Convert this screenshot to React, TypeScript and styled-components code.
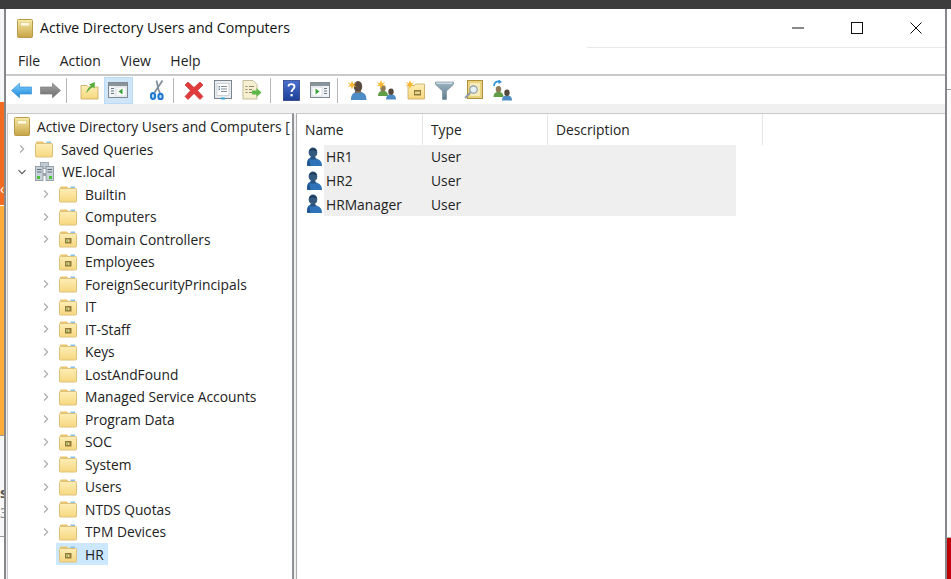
import React from "react";
import styled, { createGlobalStyle } from "styled-components";

const GlobalStyle = createGlobalStyle`
  html, body {
    margin: 0;
    height: 100%;
    overflow: hidden;
    background: #ffffff;
  }
  #root {
    height: 100%;
  }
`;

const uiFont = `"Open Sans", "Noto Sans", "Liberation Sans", sans-serif`;

const Desktop = styled.div`
  display: flex;
  flex-direction: column;
  height: 579px;
  width: 951px;
  overflow: hidden;
  font-family: ${uiFont};
  color: #1a1a1a;
`;

const TopBar = styled.div`
  height: 9px;
  flex: none;
  background: #3c3c3c;
`;

const Workspace = styled.div`
  display: flex;
  flex: 1;
  min-height: 0;
`;

const Edge = styled.div<{ $w: number }>`
  width: ${(p) => p.$w}px;
  flex: none;
  display: flex;
  flex-direction: column;
  overflow: hidden;
`;

const EdgeBlock = styled.div<{ $h: number; $bg: string; $line?: string }>`
  height: ${(p) => p.$h}px;
  flex: none;
  background: ${(p) => p.$bg};
  border-top: ${(p) => (p.$line ? `1px solid ${p.$line}` : "none")};
  box-sizing: border-box;
  font-size: 14px;
  line-height: 1;
  overflow: hidden;
  color: #555;
`;

const EdgeGlyph = styled.div<{ $top: number; $bold?: boolean; $color?: string }>`
  padding-top: ${(p) => p.$top}px;
  font-weight: ${(p) => (p.$bold ? 700 : 400)};
  color: ${(p) => p.$color ?? "#555"};
`;

const Window = styled.div`
  flex: 1;
  min-width: 0;
  display: flex;
  flex-direction: column;
  background: #ffffff;
  border-left: 2px solid #85878a;
  border-right: 2px solid #85878a;
`;

const TitleBar = styled.div`
  height: 38px;
  flex: none;
  display: flex;
  align-items: center;
  padding-left: 11px;
`;

const TitleText = styled.div`
  flex: 1;
  margin-left: 7px;
  font-size: 14.1px;
  color: #111;
  padding-bottom: 1px;
`;

const WindowButton = styled.div`
  width: 59px;
  height: 38px;
  display: flex;
  align-items: center;
  justify-content: center;
  padding-bottom: 1px;
  box-sizing: border-box;
`;

const MenuBar = styled.div`
  height: 27px;
  flex: none;
  display: flex;
  align-items: center;
  gap: 19.5px;
  padding-left: 12px;
  font-size: 14px;
  color: #222;
  position: relative;
`;

const MenuRule = styled.div`
  position: absolute;
  top: 0;
  right: 0;
  width: 358px;
  height: 1px;
  background: #e9e9e9;
`;

const Toolbar = styled.div`
  height: 28px;
  flex: none;
  display: flex;
  align-items: center;
  padding-left: 0.5px;
  border-top: 2px solid #c9c9c9;
`;

const ToolButton = styled.div<{ $active?: boolean }>`
  width: 29px;
  height: 27px;
  flex: none;
  display: flex;
  align-items: center;
  justify-content: center;
  box-sizing: border-box;
  background: ${(p) => (p.$active ? "#cfe6f8" : "transparent")};
  border: 1px solid ${(p) => (p.$active ? "#b9dbf5" : "transparent")};
`;

const ToolSep = styled.div<{ $left: number; $right: number; $hidden?: boolean }>`
  width: 1px;
  height: 25px;
  flex: none;
  margin: 0 ${(p) => p.$right}px 0 ${(p) => p.$left}px;
  background: ${(p) => (p.$hidden ? "transparent" : "#b5b5b5")};
`;

const Band = styled.div`
  height: 9px;
  flex: none;
  background: #f0f0f0;
`;

const Panes = styled.div`
  flex: 1;
  min-height: 0;
  display: flex;
  background: #f0f0f0;
`;

const TreePane = styled.div`
  width: 287px;
  margin-left: 1px;
  flex: none;
  box-sizing: border-box;
  background: #ffffff;
  border-right: 2px solid #8f9296;
  border-top: 1px solid #c8c8c8;
  border-left: 1px solid #c8c8c8;
  padding-top: 1.5px;
  overflow: hidden;
  display: grid;
  grid-auto-rows: 22.5px;
  font-size: 13.8px;
  color: #222;
`;

const TreeRow = styled.div<{ $level: number }>`
  display: flex;
  align-items: center;
  padding-left: ${(p) => 6 + p.$level * 24}px;
  white-space: nowrap;
`;

const Twisty = styled.div`
  width: 16px;
  flex: none;
  display: flex;
  align-items: center;
  justify-content: center;
`;

const NodeLabel = styled.div<{ $selected?: boolean }>`
  display: flex;
  align-items: center;
  gap: 8px;
  height: 22px;
  padding: 0 4px 0 3px;
  margin-left: 2px;
  background: ${(p) => (p.$selected ? "#cce8ff" : "transparent")};
`;

const RootRow = styled.div`
  display: flex;
  align-items: center;
  gap: 7px;
  padding-left: 6px;
  white-space: nowrap;
`;

const ListPane = styled.div`
  flex: 1;
  min-width: 0;
  margin-left: 2px;
  background: #ffffff;
  border-top: 1px solid #c8c8c8;
  border-left: 1px solid #a9acaf;
  font-size: 13.8px;
  color: #222;
`;

const ListHeader = styled.div`
  display: grid;
  grid-template-columns: 126px 125px 215px;
  height: 31px;
  width: 466px;
`;

const HeaderCell = styled.div`
  display: flex;
  align-items: center;
  padding-left: 8px;
  border-right: 1px solid #e5e5e5;
`;

const ListRow = styled.div`
  display: grid;
  grid-template-columns: 27px 99px 1fr;
  align-items: center;
  height: 23.7px;
  width: 439px;
`;

const RowIcon = styled.div`
  display: flex;
  align-items: center;
  padding-left: 9px;
  height: 100%;
`;

const RowCell = styled.div<{ $inset?: number }>`
  display: flex;
  align-items: center;
  height: 100%;
  background: #efefef;
  padding-left: ${(p) => p.$inset ?? 2}px;
`;

const Defs = styled.svg`
  position: absolute;
  width: 0;
  height: 0;
`;

const GradientDefs = () => (
  <Defs aria-hidden>
    <defs>
      <linearGradient id="gold" x1="0" y1="0" x2="0" y2="1">
        <stop offset="0" stopColor="#f8eba8" />
        <stop offset="1" stopColor="#c7a445" />
      </linearGradient>
      <linearGradient id="folder" x1="0" y1="0" x2="0" y2="1">
        <stop offset="0" stopColor="#fdeeb6" />
        <stop offset="1" stopColor="#f6d77f" />
      </linearGradient>
      <linearGradient id="blueArrow" x1="0" y1="0" x2="0" y2="1">
        <stop offset="0" stopColor="#7fd0ff" />
        <stop offset="1" stopColor="#1b86d8" />
      </linearGradient>
      <linearGradient id="greyArrow" x1="0" y1="0" x2="0" y2="1">
        <stop offset="0" stopColor="#a6a6a6" />
        <stop offset="1" stopColor="#6b6b6b" />
      </linearGradient>
      <linearGradient id="help" x1="0" y1="0" x2="0" y2="1">
        <stop offset="0" stopColor="#4a6fd0" />
        <stop offset="1" stopColor="#1c3f96" />
      </linearGradient>
      <linearGradient id="funnel" x1="0" y1="0" x2="0" y2="1">
        <stop offset="0" stopColor="#9fb4c2" />
        <stop offset="1" stopColor="#5f7d90" />
      </linearGradient>
    </defs>
  </Defs>
);

const Chevron = ({ open }: { open?: boolean }) =>
  open ? (
    <svg width="10" height="10" viewBox="0 0 10 10">
      <path d="M1.5 3.2 5 6.7 8.5 3.2" fill="none" stroke="#555" strokeWidth="1.1" />
    </svg>
  ) : (
    <svg width="10" height="10" viewBox="0 0 10 10">
      <path d="M3.2 1.5 6.7 5 3.2 8.5" fill="none" stroke="#a8a8a8" strokeWidth="1.1" />
    </svg>
  );

const BookIcon = () => (
  <svg width="16" height="19" viewBox="0 0 16 19" style={{ flex: "none" }}>
    <rect x="0.5" y="0.5" width="15" height="18" rx="1" fill="url(#gold)" stroke="#b99a4a" />
    <rect x="3.5" y="3.5" width="9" height="3.5" fill="#fdf8dc" stroke="#d9c67c" strokeWidth="0.6" />
  </svg>
);

const FolderIcon = ({ ou }: { ou?: boolean }) => (
  <svg width="18" height="18" viewBox="0 0 18 18" style={{ flex: "none" }}>
    <path d="M1 4V2.5C1 2 1.4 1.6 2 1.6H8L9.3 3H16.5V4Z" fill="#e9c66d" />
    <rect x="11.5" y="1.5" width="4.5" height="1.6" fill="#8cc0e8" />
    <rect x="0.5" y="3.5" width="17" height="13.5" rx="0.8" fill="url(#folder)" stroke="#dfc27a" />
    {ou && (
      <>
        <rect x="6" y="8" width="6.5" height="5.5" fill="#8f7a3c" />
        <rect x="7" y="9.5" width="3.5" height="2.6" fill="#e6d48a" />
        <rect x="7.5" y="10.5" width="1.5" height="1.2" fill="#4f9a3a" />
      </>
    )}
  </svg>
);

const DomainIcon = () => (
  <svg width="19" height="19" viewBox="0 0 19 19" style={{ flex: "none" }}>
    <rect x="5.5" y="0.5" width="8" height="6" fill="#c2cbd2" stroke="#8794a0" strokeWidth="0.7" />
    <rect x="0.5" y="4.5" width="7.5" height="14" fill="#c9d1d8" stroke="#84909b" strokeWidth="0.8" />
    <rect x="11" y="4.5" width="7.5" height="14" fill="#c9d1d8" stroke="#84909b" strokeWidth="0.8" />
    <path d="M2 7.5h4.5M2 10h4.5M12.5 7.5H17M12.5 10H17" stroke="#5f6d79" strokeWidth="1" />
    <rect x="2" y="14" width="3" height="3" fill="#4cc23a" />
    <rect x="14" y="14" width="3" height="3" fill="#4cc23a" />
    <rect x="8" y="11" width="3" height="3" fill="#9aa5ae" />
  </svg>
);

const UserIcon = () => (
  <svg width="17" height="20" viewBox="0 0 17 20" style={{ flex: "none" }}>
    <path d="M1 18c0-4 1-6.500 3.500-7.500h4c1 .5 2 1 3 1.500 3 1 4.500 3 4.500 7H3c-1 0-2-.2-2-1Z" fill="#2f72b8" />
    <path d="M1 18c0-3 .5-5 2-6.500l1.500 7.500H3c-1 0-2-.2-2-1Z" fill="#1f5590" />
    <ellipse cx="7" cy="5.500" rx="4.300" ry="5" fill="#33597f" />
    <path d="M2.800 4.500C3.500 0 10.500 0 11.200 4.500 9 3.300 5 3.300 2.800 4.500Z" fill="#1d3d60" />
    <path d="M4.500 10h5v2.500h-5Z" fill="#2a5380" />
  </svg>
);

const BackIcon = () => (
  <svg width="21" height="17" viewBox="0 0 21 17">
    <path d="M.5 8.500 8.500 1.200V5H20.500V12H8.500v3.800Z" fill="url(#blueArrow)" stroke="#3e93d1" strokeWidth=".7" />
  </svg>
);

const ForwardIcon = () => (
  <svg width="21" height="17" viewBox="0 0 21 17">
    <path d="M20.500 8.500 12.500 1.200V5H.5V12H12.500v3.800Z" fill="url(#greyArrow)" stroke="#7d7d7d" strokeWidth=".7" />
  </svg>
);

const UpIcon = () => (
  <svg width="19" height="19" viewBox="0 0 19 19">
    <path d="M1 4.500h6l1.500 1.500h9.500v12H1Z" fill="url(#folder)" stroke="#c9a75a" strokeWidth=".8" />
    <path d="M6 13c.5-4 2.500-6.500 5-8L9 3.500l6-2.500-.5 6.500-1.700-1.500c-2.500 1.500-4.500 3.500-6.800 6.500Z" fill="#58ad3a" />
  </svg>
);

const PaneFrame = () => (
  <>
    <rect x=".5" y="1.500" width="19" height="15" fill="#f1f4f6" stroke="#7f8a92" />
    <rect x="1" y="2" width="18" height="3" fill="#8a949b" />
  </>
);

const TreeToggleIcon = () => (
  <svg width="20" height="18" viewBox="0 0 20 18">
    <PaneFrame />
    <path d="M3 7.500h3M3 10h3M3 12.500h3" stroke="#6a7a88" />
    <rect x="8" y="6" width="10" height="9" fill="#fff" stroke="#b9c2c9" strokeWidth=".5" />
    <path d="M14.500 7.500v6L10.500 10.500Z" fill="#3aa33a" />
  </svg>
);

const ActionPaneIcon = () => (
  <svg width="20" height="18" viewBox="0 0 20 18">
    <PaneFrame />
    <rect x="2" y="6" width="10" height="9" fill="#fff" stroke="#b9c2c9" strokeWidth=".5" />
    <path d="M5.500 7.500v6l4-3Z" fill="#3aa33a" />
    <path d="M14 7.500h3M14 10h3M14 12.500h3" stroke="#6a7a88" />
  </svg>
);

const CutIcon = () => (
  <svg width="14" height="20" viewBox="0 0 14 20">
    <path d="M12.500.5 4.500 12.500M6.500.5 8.500 9.500 10 13" stroke="#7f8e99" strokeWidth="1.700" fill="none" />
    <ellipse cx="3" cy="16" rx="2.200" ry="3" fill="#bcdcf5" stroke="#1f78d0" strokeWidth="2" />
    <ellipse cx="10.500" cy="16.500" rx="2.200" ry="2.800" fill="#bcdcf5" stroke="#1f78d0" strokeWidth="2" />
  </svg>
);

const DeleteIcon = () => (
  <svg width="20" height="19" viewBox="0 0 20 19">
    <path d="M4 1 10 6.500 16 1 19 4 13.500 9.500 19 15.500 16 18.500 10 12.500 4 18.500 1 15.500 6.500 9.500 1 4Z" fill="#e23b3b" stroke="#b92a2a" strokeWidth=".6" />
  </svg>
);

const PropertiesIcon = () => (
  <svg width="18" height="20" viewBox="0 0 18 20">
    <rect x=".5" y=".5" width="17" height="18" fill="#e9edf0" stroke="#7b858d" />
    <rect x="3" y="3.500" width="12" height="12" fill="#fff" stroke="#b4bcc3" strokeWidth=".6" />
    <path d="M7 6.500h6M7 9h6M7 11.500h6" stroke="#7f8c96" />
    <rect x="4.500" y="6" width="1.500" height="1.500" fill="#5c8cb3" />
    <rect x="4.500" y="8.500" width="1.500" height="1.500" fill="#5c8cb3" />
    <rect x="7" y="17.500" width="4" height="2" fill="#35a3dd" />
  </svg>
);

const ExportIcon = () => (
  <svg width="20" height="20" viewBox="0 0 20 20">
    <path d="M1 .5h10l4 4V19H1Z" fill="#f6efd2" stroke="#b5ab86" strokeWidth=".8" />
    <path d="M3.500 6.500h2M7 6.500h5M3.500 9.500h2M7 9.500h3M3.500 12.500h2M7 12.500h3" stroke="#8d8667" />
    <path d="M10 10.500h4.500V8l5 4.500-5 4.500v-2.500H10Z" fill="#5cb947" />
  </svg>
);

const HelpIcon = () => (
  <svg width="17" height="21" viewBox="0 0 17 21">
    <rect x=".5" y=".5" width="16" height="20" fill="url(#help)" stroke="#1a2f73" strokeWidth=".7" />
    <path d="M5.500 6.500C5.500 3.500 11.500 3.300 11.500 6.500c0 2.500-3 2.700-3 5.500" fill="none" stroke="#fff" strokeWidth="1.900" />
    <rect x="7.500" y="14" width="2.200" height="2.300" fill="#fff" />
  </svg>
);

const Spark = ({ x, y }: { x: number; y: number }) => (
  <path
    transform={`translate(${x} ${y})`}
    d="M0-4.500 1.200-1.300 4.500-2.500 2-.2 4.500 2 1.200 1.200 0 4.500-1.200 1.200-4.500 2-2-.2-4.500-2.500-1.200-1.300Z"
    fill="#f7b733"
  />
);

const NewUserIcon = () => (
  <svg width="20" height="21" viewBox="0 0 20 21">
    <path d="M4 20c0-5 2-7 4.500-8 2 1 4 1 6 0 3 1 5 3 5 8Z" fill="#4e8cc6" />
    <ellipse cx="11" cy="6.500" rx="4.200" ry="5.500" fill="#5a4a3e" />
    <path d="M8 11h6v2H8Z" fill="#7e6a56" />
    <Spark x={5} y={5} />
  </svg>
);

const Person = ({ x, y, body, head }: { x: number; y: number; body: string; head: string }) => (
  <g transform={`translate(${x} ${y})`}>
    <path d="M0 11c0-3 1.500-4.500 3.500-5h3c2 .5 3.500 2 3.500 5Z" fill={body} />
    <ellipse cx="5" cy="3.300" rx="2.700" ry="3.300" fill={head} />
  </g>
);

const NewGroupIcon = () => (
  <svg width="21" height="20" viewBox="0 0 21 20">
    <Person x={2} y={5} body="#5f9e47" head="#8b7a55" />
    <Person x={10} y={8.500} body="#4e8cc6" head="#55493d" />
    <Spark x={5} y={4.500} />
  </svg>
);

const NewOuIcon = () => (
  <svg width="21" height="20" viewBox="0 0 21 20">
    <path d="M3 5.500h6l1.500-1.500h9v15H3Z" fill="url(#folder)" stroke="#c9a75a" strokeWidth=".8" />
    <rect x="9" y="10" width="7" height="5.500" fill="#8f7a3c" />
    <rect x="10" y="11.500" width="5" height="2.500" fill="#e6d48a" />
    <Spark x={5} y={4.500} />
  </svg>
);

const FilterIcon = () => (
  <svg width="19" height="19" viewBox="0 0 19 19">
    <path d="M.5 1h18v2.500L11.500 10v8.500h-4V10L.5 3.500Z" fill="url(#funnel)" stroke="#6f8696" strokeWidth=".6" />
    <rect x="1.500" y="1.500" width="16" height="1.500" fill="#cfdbe3" />
  </svg>
);

const FindIcon = () => (
  <svg width="19" height="20" viewBox="0 0 19 20">
    <rect x="3.500" y=".5" width="15" height="18" fill="#e9d17f" stroke="#ad9138" />
    <rect x="6" y="3" width="10" height="13" fill="#f6ebb8" />
    <circle cx="9.500" cy="9.500" r="3.700" fill="#e9f1f5" stroke="#8a9aa5" strokeWidth="1.200" />
    <path d="M6.500 12.500 1 18" stroke="#8a9aa5" strokeWidth="1.800" />
  </svg>
);

const AddToGroupIcon = () => (
  <svg width="21" height="21" viewBox="0 0 21 21">
    <Person x={1.500} y={6} body="#5f9e47" head="#8b7a55" />
    <Person x={10} y={9.500} body="#4e8cc6" head="#55493d" />
    <path d="M2 6C2 2 5 .8 8 1.500" fill="none" stroke="#2d8fd6" strokeWidth="1.700" />
    <path d="M6.500-.5 10 2 6.500 4Z" fill="#2d8fd6" />
  </svg>
);

type TreeNode = { name: string; level: number; ou?: boolean; leaf?: boolean; selected?: boolean };

const children: TreeNode[] = [
  { name: "Builtin", level: 1 },
  { name: "Computers", level: 1 },
  { name: "Domain Controllers", level: 1, ou: true },
  { name: "Employees", level: 1, ou: true, leaf: true },
  { name: "ForeignSecurityPrincipals", level: 1 },
  { name: "IT", level: 1, ou: true },
  { name: "IT-Staff", level: 1, ou: true },
  { name: "Keys", level: 1 },
  { name: "LostAndFound", level: 1 },
  { name: "Managed Service Accounts", level: 1 },
  { name: "Program Data", level: 1 },
  { name: "SOC", level: 1, ou: true },
  { name: "System", level: 1 },
  { name: "Users", level: 1 },
  { name: "NTDS Quotas", level: 1 },
  { name: "TPM Devices", level: 1 },
  { name: "HR", level: 1, ou: true, leaf: true, selected: true },
];

const users = ["HR1", "HR2", "HRManager"];

export default function App() {
  return (
    <Desktop>
      <GlobalStyle />
      <GradientDefs />
      <TopBar />
      <Workspace>
        <Edge $w={4}>
          <EdgeBlock $h={93} $bg="#f7f7f7" />
          <EdgeBlock $h={103} $bg="#f26b21">
            <EdgeGlyph $top={80} $color="#ffffff">‹</EdgeGlyph>
          </EdgeBlock>
          <EdgeBlock $h={230} $bg="#ffad3a" $line="#ffffff" />
          <EdgeBlock $h={101} $bg="#f7f7f7" $line="#9a9a9a">
            <EdgeGlyph $top={50} $bold>s</EdgeGlyph>
            <EdgeGlyph $top={6} $color="#8a8a8a">3</EdgeGlyph>
          </EdgeBlock>
          <EdgeBlock $h={43} $bg="#ffffff" $line="#9a9a9a" />
        </Edge>
        <Window>
          <TitleBar>
            <BookIcon />
            <TitleText>Active Directory Users and Computers</TitleText>
            <WindowButton>
              <svg width="12" height="2" viewBox="0 0 12 2"><path d="M0 1h12" stroke="#111" /></svg>
            </WindowButton>
            <WindowButton>
              <svg width="12" height="12" viewBox="0 0 12 12"><rect x=".5" y=".5" width="11" height="11" fill="none" stroke="#111" /></svg>
            </WindowButton>
            <WindowButton>
              <svg width="12" height="12" viewBox="0 0 12 12"><path d="M.5.5l11 11M11.500.5l-11 11" stroke="#111" /></svg>
            </WindowButton>
          </TitleBar>
          <MenuBar>
            <MenuRule />
            <span>File</span>
            <span>Action</span>
            <span>View</span>
            <span>Help</span>
          </MenuBar>
          <Toolbar>
            <ToolButton><BackIcon /></ToolButton>
            <ToolButton><ForwardIcon /></ToolButton>
            <ToolSep $left={1} $right={8} />
            <ToolButton><UpIcon /></ToolButton>
            <ToolButton $active><TreeToggleIcon /></ToolButton>
            <ToolSep $left={5} $right={4} $hidden />
            <ToolButton><CutIcon /></ToolButton>
            <ToolSep $left={1} $right={6} />
            <ToolButton><DeleteIcon /></ToolButton>
            <ToolButton><PropertiesIcon /></ToolButton>
            <ToolButton><ExportIcon /></ToolButton>
            <ToolSep $left={3} $right={6} />
            <ToolButton><HelpIcon /></ToolButton>
            <ToolButton><ActionPaneIcon /></ToolButton>
            <ToolSep $left={2} $right={5} />
            <ToolButton><NewUserIcon /></ToolButton>
            <ToolButton><NewGroupIcon /></ToolButton>
            <ToolButton><NewOuIcon /></ToolButton>
            <ToolButton><FilterIcon /></ToolButton>
            <ToolButton><FindIcon /></ToolButton>
            <ToolButton><AddToGroupIcon /></ToolButton>
          </Toolbar>
          <Band />
          <Panes>
            <TreePane>
              <RootRow>
                <BookIcon />
                Active Directory Users and Computers [
              </RootRow>
              <TreeRow $level={0}>
                <Twisty><Chevron /></Twisty>
                <NodeLabel><FolderIcon />Saved Queries</NodeLabel>
              </TreeRow>
              <TreeRow $level={0}>
                <Twisty><Chevron open /></Twisty>
                <NodeLabel><DomainIcon />WE.local</NodeLabel>
              </TreeRow>
              {children.map((node) => (
                <TreeRow key={node.name} $level={node.level}>
                  <Twisty>{!node.leaf && <Chevron />}</Twisty>
                  <NodeLabel $selected={node.selected}>
                    <FolderIcon ou={node.ou} />
                    {node.name}
                  </NodeLabel>
                </TreeRow>
              ))}
            </TreePane>
            <ListPane>
              <ListHeader>
                <HeaderCell>Name</HeaderCell>
                <HeaderCell>Type</HeaderCell>
                <HeaderCell>Description</HeaderCell>
              </ListHeader>
              {users.map((user) => (
                <ListRow key={user}>
                  <RowIcon><UserIcon /></RowIcon>
                  <RowCell>{user}</RowCell>
                  <RowCell $inset={8}>User</RowCell>
                </ListRow>
              ))}
            </ListPane>
          </Panes>
        </Window>
        <Edge $w={4}>
          <EdgeBlock $h={80} $bg="#ffffff" />
          <EdgeBlock $h={448} $bg="#fbfbfb" $line="#9a9a9a" />
          <EdgeBlock $h={42} $bg="#c00000" $line="#b0b0b0" />
        </Edge>
      </Workspace>
    </Desktop>
  );
}
